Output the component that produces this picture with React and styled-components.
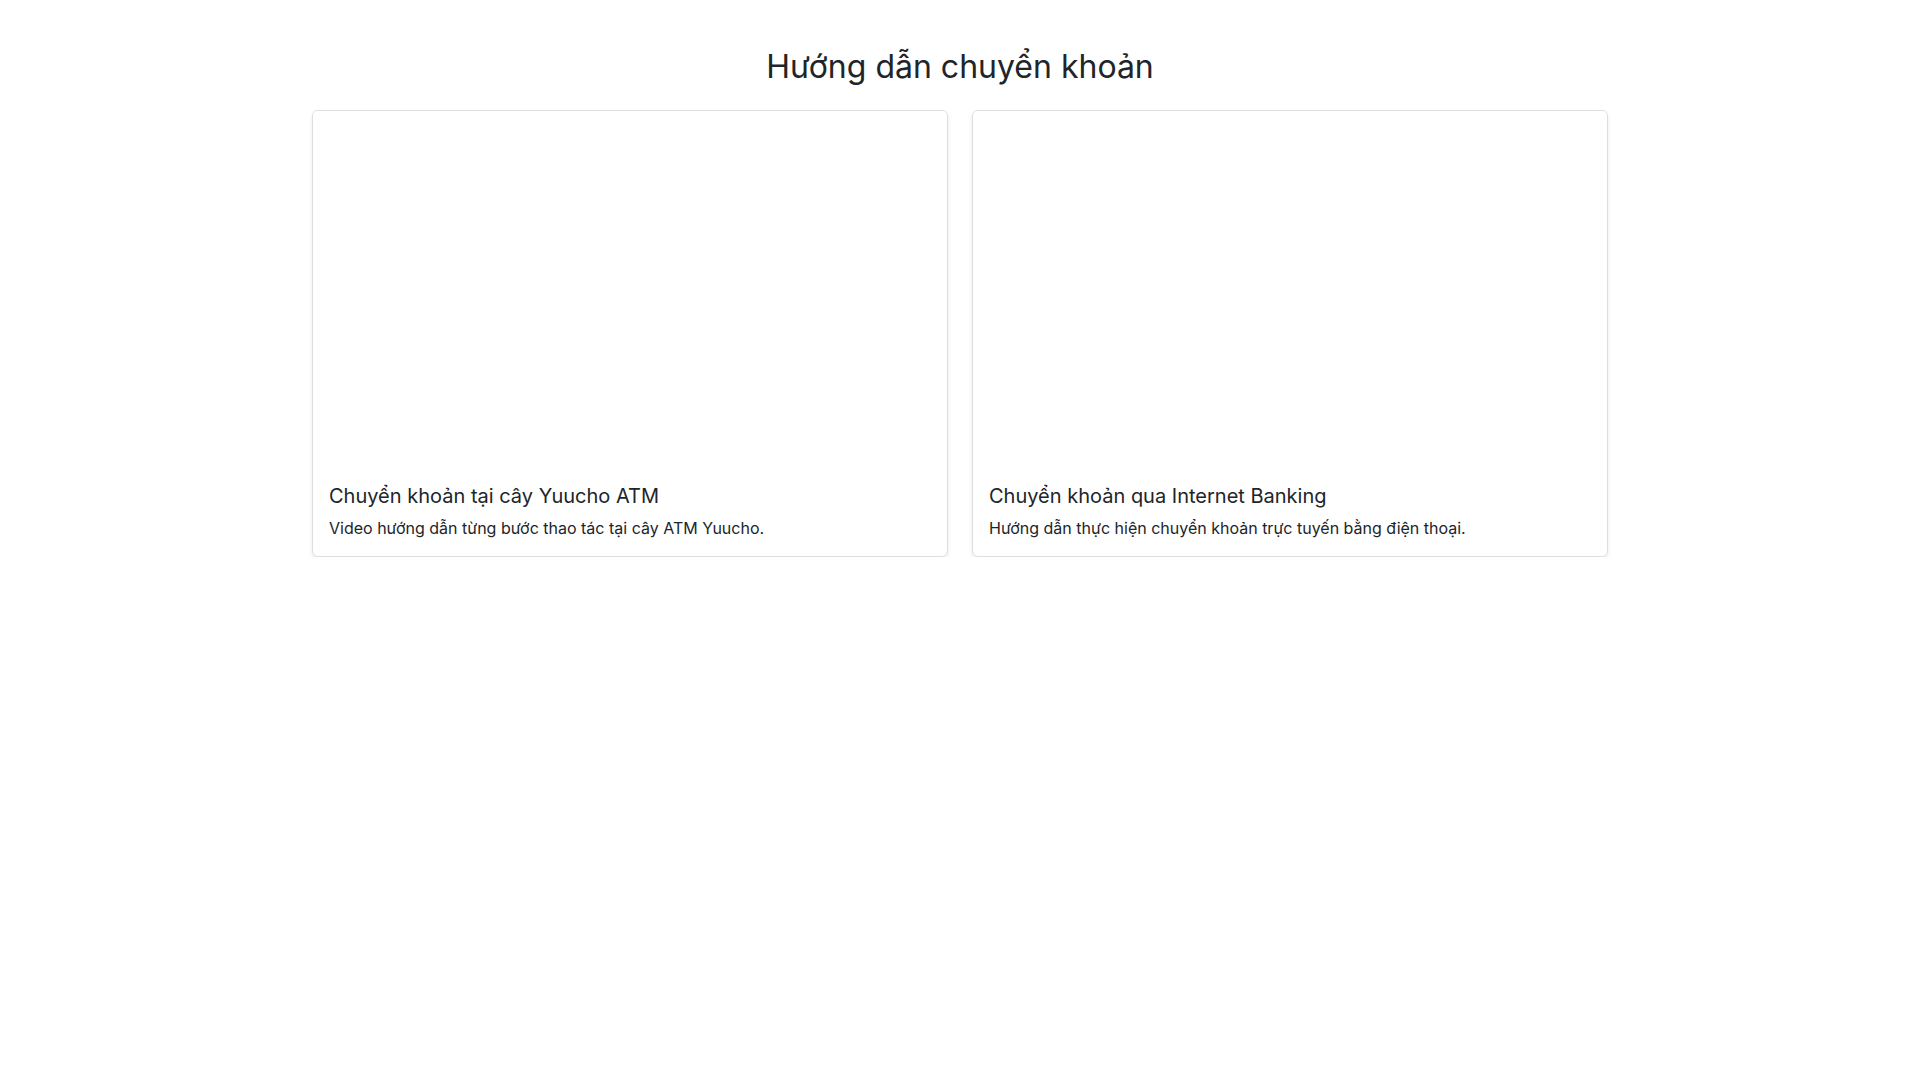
import styled, { createGlobalStyle } from 'styled-components';

const GlobalStyle = createGlobalStyle`
    * {
        box-sizing: border-box;
    }

    body {
        margin: 0;
        background: #fff;
        color: #212529;
        font-family: Inter, "Noto Sans", sans-serif;
        font-size: 16px;
        line-height: 1.5;
    }
`;

const PageContainer = styled.div`
    width: 1320px;
    margin: 0 auto;
    padding: 48px 12px 0;
`;

const PageTitle = styled.h2`
    margin: 0 0 24px;
    font-size: 32px;
    font-weight: 400;
    line-height: 1.2;
    text-align: center;
    color: #212529;
`;

const CardGrid = styled.div`
    display: grid;
    grid-template-columns: repeat(2, 1fr);
    gap: 24px;
`;

const Card = styled.div`
    display: flex;
    flex-direction: column;
    background: #fff;
    border: 1px solid #dcdee0;
    border-radius: 6px;
    box-shadow: 0 2px 4px rgba(0, 0, 0, 0.08);
    overflow: hidden;
`;

// empty 16:9 video slot
const VideoFrame = styled.div`
    aspect-ratio: 16 / 9;
    background: #fff;
`;

const CardBody = styled.div`
    padding: 16px;
`;

const CardTitle = styled.h5`
    margin: 0 0 8px;
    font-size: 20px;
    font-weight: 400;
    line-height: 1.2;
    color: #212529;
`;

const CardText = styled.p`
    margin: 0;
    font-size: 16px;
    line-height: 1.5;
    color: #212529;
`;

const guides = [
    {
        title: 'Chuyển khoản tại cây Yuucho ATM',
        text: 'Video hướng dẫn từng bước thao tác tại cây ATM Yuucho.',
    },
    {
        title: 'Chuyển khoản qua Internet Banking',
        text: 'Hướng dẫn thực hiện chuyển khoản trực tuyến bằng điện thoại.',
    },
];

const App = () => {
    return (
        <>
            <GlobalStyle />
            <PageContainer>
                <PageTitle>Hướng dẫn chuyển khoản</PageTitle>
                <CardGrid>
                    {guides.map((guide) => (
                        <Card key={guide.title}>
                            <VideoFrame />
                            <CardBody>
                                <CardTitle>{guide.title}</CardTitle>
                                <CardText>{guide.text}</CardText>
                            </CardBody>
                        </Card>
                    ))}
                </CardGrid>
            </PageContainer>
        </>
    );
};

export default App;
